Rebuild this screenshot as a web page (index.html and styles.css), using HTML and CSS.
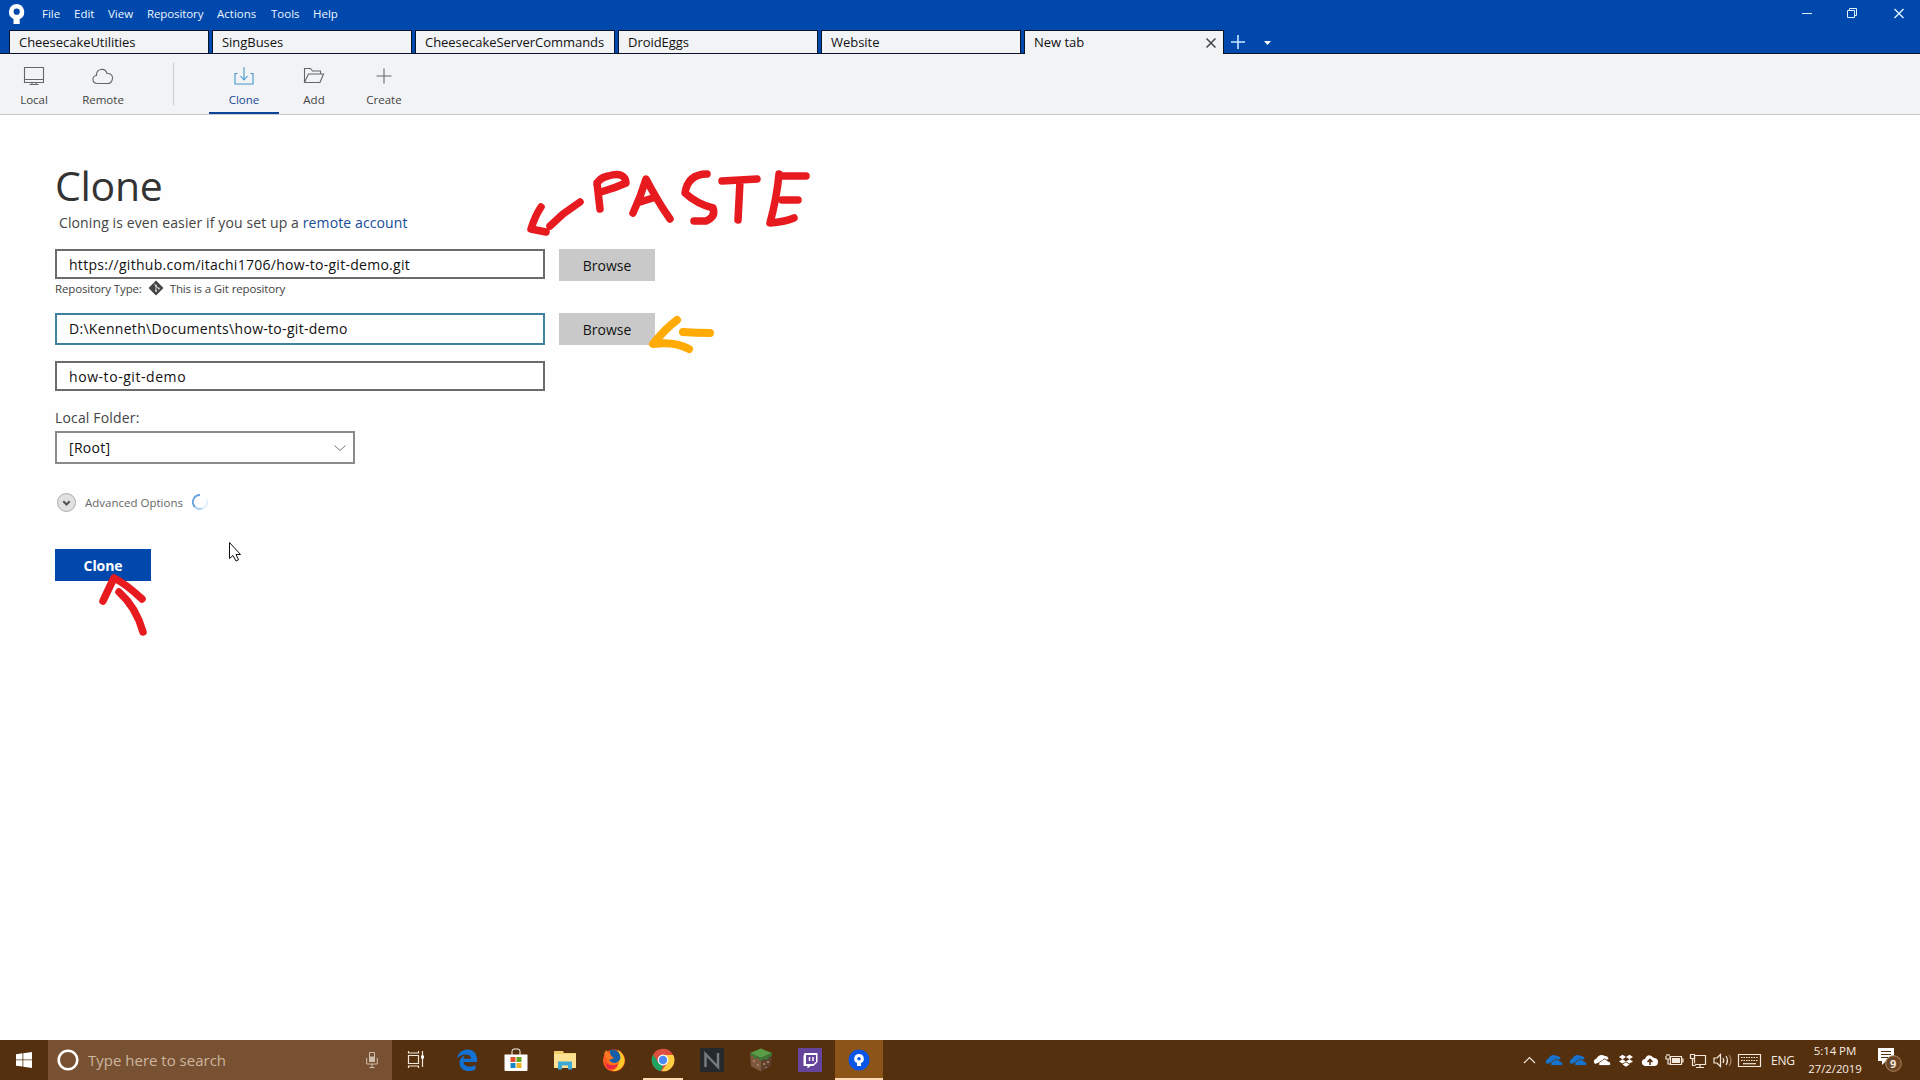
FILE: index.html
```
<!DOCTYPE html>
<html lang="en">
<head>
<meta charset="utf-8">
<title>Clone</title>
<link rel="stylesheet" href="styles.css">
</head>
<body>
<header class="titlebar">
  <svg class="app-logo" width="18" height="21" viewBox="0 0 18 21"><path fill="#fff" fill-rule="evenodd" d="M8.700 0A7.900 7.900 0 0 0 5.500 15V20H11.700V15A7.900 7.900 0 0 0 8.700 0ZM8.700 4.600A3.100 3.100 0 1 1 8.700 10.800A3.100 3.100 0 1 1 8.700 4.600Z"/></svg>
  <nav class="menu">
    <span class="m1">File</span><span class="m2">Edit</span><span class="m3">View</span><span class="m4">Repository</span><span class="m5">Actions</span><span class="m6">Tools</span><span class="m7">Help</span>
  </nav>
  <svg class="window-controls" width="108" height="14" viewBox="0 0 108 14" fill="none" stroke="#dff4ff"><path d="M0 6.500H10M45.500 3.500h7v7h-7zM47.500 3V1.500h7v7H53"/><path stroke-width="1.400" d="M92.500 2l9 9M101.500 2l-9 9"/></svg>
</header>
<div class="tabs">
  <div class="tab">CheesecakeUtilities</div>
  <div class="tab">SingBuses</div>
  <div class="tab">CheesecakeServerCommands</div>
  <div class="tab">DroidEggs</div>
  <div class="tab">Website</div>
  <div class="tab active">New tab<svg width="10" height="10" viewBox="0 0 10 10" stroke="#444" stroke-width="1.500"><path d="M.5.500l9 9M9.500.500l-9 9"/></svg></div>
  <svg class="tab-actions" width="50" height="28" viewBox="0 0 50 28"><path d="M14 5v14M7 12h14" stroke="#c9e9ff" stroke-width="1.600"/><path d="M40 11h7l-3.500 4z" fill="#fff"/></svg>
</div>
<div class="toolbar">
  <div class="tool t-local"><svg width="24" height="24" viewBox="0 0 24 24"><path d="M2.500 3.500h19v15h-19zM2.500 15.500h19M10 18.500v2M14 18.500v2M7.500 20.500h9"/></svg><span>Local</span></div>
  <div class="tool t-remote"><svg width="24" height="24" viewBox="0 0 24 24"><path d="M7 19.500C0 19.500 1 11.500 5.500 11.500C5 4 14.500 3.500 16 9.500C21 9 22.500 13 21 16.500C20 19 19 19.500 17 19.500Z"/></svg><span>Remote</span></div>
  <i class="divider"></i>
  <div class="tool t-clone"><svg width="24" height="24" viewBox="0 0 24 24"><path d="M12 3v12.500M8.500 12l3.500 4 3.500-4M5.500 9.500h-2.500v10.500h18v-10.500h-2.500"/></svg><span>Clone</span></div>
  <div class="tool"><svg width="24" height="24" viewBox="0 0 24 24"><path d="M2.500 18.500v-14h6l2 2.500h8v3M2.500 18.500l4-8.500h15l-3.500 8.500z"/></svg><span>Add</span></div>
  <div class="tool"><svg width="24" height="24" viewBox="0 0 24 24"><path d="M12 4.500v15M4.500 12h15"/></svg><span>Create</span></div>
</div>
<main class="page">
  <h1>Clone</h1>
  <p class="hint">Cloning is even easier if you set up a <a>remote account</a></p>
  <div class="row first"><div class="field url">https://github.com/itachi1706/how-to-git-demo.git</div><div class="button">Browse</div></div>
  <div class="repo-type"><span>Repository Type:</span><svg width="16" height="16" viewBox="0 0 16 16"><path d="M8 .5L15.500 8L8 15.500L.5 8Z" fill="#444"/><path d="M6 3.500L8 5.500V11M8 6l2.700 2.500" stroke="#ddd" fill="none"/><g fill="#ddd"><circle cx="8" cy="5.700" r="1"/><circle cx="8" cy="11" r="1"/><circle cx="10.800" cy="8.500" r="1"/></g></svg><span>This is a Git repository</span></div>
  <div class="row second"><div class="field path">D:\Kenneth\Documents\how-to-git-demo</div><div class="button">Browse</div></div>
  <div class="field name">how-to-git-demo</div>
  <div class="folder-label">Local Folder:</div>
  <div class="select"><span>[Root]</span><svg width="12" height="8" viewBox="0 0 12 8" fill="none" stroke="#777"><path d="M.5 1.500L6 6.500l5.500-5"/></svg></div>
  <div class="advanced">
    <svg width="20" height="20" viewBox="0 0 20 20"><circle cx="10.500" cy="10.500" r="9" fill="#e1e1e1" stroke="#aaa"/><path d="M7.300 9.300L10.500 12.500l3.200-3.200" fill="none" stroke="#555" stroke-width="2.200"/></svg>
    <span>Advanced Options</span>
    <svg width="16" height="16" viewBox="0 0 16 16" fill="none" stroke-width="1.800"><path d="M8 1A7 7 0 0 0 3 13" stroke="#6a9fdf"/><path d="M3 13A7 7 0 0 0 10 14.700" stroke="#a9cdf4"/><path d="M10 14.700A7 7 0 0 0 15 6" stroke="#e0edfb"/></svg>
  </div>
  <div class="button primary">Clone</div>
</main>
<footer class="taskbar">
  <div class="start"><svg width="16" height="16" viewBox="0 0 16 16" fill="#fff"><path d="M0 2.300L6.500 1.300V7.500H0zM7.300 1.200L16 0V7.500H7.300zM0 8.300H6.500V14.600L0 13.700zM7.300 8.300H16V16L7.300 14.800z"/></svg></div>
  <div class="search"><svg width="22" height="22" viewBox="0 0 22 22"><circle cx="11" cy="11" r="9.300" fill="none" stroke="#fff" stroke-width="2.600"/></svg><span>Type here to search</span><svg class="mic" width="12" height="18" viewBox="0 0 12 18" fill="none" stroke="#d0bdab"><path d="M3.500 1.500h5v9h-5z"/><path d="M3.500 6h5v4.500h-5z" fill="#d0bdab"/><path d="M.7 7v6h10.600V7M6 13v3.500M3.500 16.500h5"/></svg></div>
  <div class="app taskview"><svg width="18" height="18" viewBox="0 0 18 18" fill="none" stroke="#f4e8dc" stroke-width="1.200"><path d="M1.500 4.500h10v8h-10zM1.500 0v2h10V0M1.500 17v-2h10v2M15.500 0v16"/><path d="M14 4.500h3v3h-3z" fill="#fff" stroke="none"/></svg></div>
  <div class="app"><svg width="24" height="24" viewBox="0 0 24 24"><path fill="#1271d2" d="M2 10.500C3.500 4 8 1.500 12.500 1.500C19 1.500 22 6.500 22 11V14H8.500C9 19 16 20 20.500 17V21.500C13.500 25 4.500 22.500 4.500 15C4.500 11 7 8.500 10 7.500C9 8.800 8.500 9.700 8.500 10.800H16C16 5 6.500 5 2 10.500Z"/></svg></div>
  <div class="app"><svg width="24" height="24" viewBox="0 0 24 24"><path d="M8 7V3.500Q8 1 10 1h4q2 0 2 2.500V7" fill="none" stroke="#fff"/><path d="M.5 6.500h23V22q0 1-1 1h-21q-1 0-1-1z" fill="#fff"/><path fill="#e04e2d" d="M6.500 9h5v5h-5z"/><path fill="#65a51d" d="M12.500 9h5v5h-5z"/><path fill="#1586c8" d="M6.500 15h5v5h-5z"/><path fill="#f0b52c" d="M12.500 15h5v5h-5z"/></svg></div>
  <div class="app"><svg width="24" height="24" viewBox="0 0 24 24"><path d="M1 3h9l1 2h12v14H1z" fill="#f2cd6a"/><path d="M1 6h22v14H1z" fill="#ffe194"/><path d="M5 21.500v-8h14v8h-4v-4h-6v4z" fill="#3fa9d5"/></svg></div>
  <div class="app"><svg width="24" height="24" viewBox="0 0 24 24"><circle cx="12" cy="12.500" r="11" fill="#ff5a20"/><path d="M16 2Q21 5 22.500 11A11 11 0 0 1 10 23Q20 20 16 2Z" fill="#ffc928"/><path d="M2 6L4 2 7 5Q17 2 18 11Q17 17 11 17Q5 16 5 11Z" fill="#ff7722"/><path d="M8 2Q16 1 18 7Q20 13 13 15Q9 15 7 12L12 10Q7 7 8 2Z" fill="#155fa8"/><path d="M3 14Q8 20 16 16Q12 23 5 20Z" fill="#e82745"/></svg></div>
  <div class="app running"><svg width="24" height="24" viewBox="0 0 24 24"><circle cx="12" cy="12" r="11.300" fill="#dd4f3f"/><path d="M2.200 6.400L7.500 15L12 17.500L10 23.200A11.300 11.300 0 0 1 2.200 6.400Z" fill="#1da261"/><path d="M12 7H22.200A11.300 11.300 0 0 1 10.500 23.200L17 14Z" fill="#ffcf43"/><circle cx="12" cy="12" r="5.400" fill="#fff"/><circle cx="12" cy="12" r="4.200" fill="#4c8bf5"/></svg></div>
  <div class="app"><svg width="24" height="24" viewBox="0 0 24 24"><path d="M0 0h24v24H0z" fill="#25292c"/><path d="M5.500 19V6l12.500 13V5" fill="none" stroke="#747b81" stroke-width="2.500"/></svg></div>
  <div class="app"><svg width="24" height="24" viewBox="0 0 24 24"><path d="M1 5L12 .5L23 5L12 10Z" fill="#5a9d47"/><path d="M1 5l11 5v13.500L2 18z" fill="#80583f"/><path d="M23 5l-11 5v13.500L22 18z" fill="#5e402f"/><path d="M1 5l11 5 11-5v3l-3 1-2 3-3-1-3 2-3-3-3 1-2-3-2 0z" fill="#3c7835"/><path d="M4 12h2v2H4zm4 4h2v2H8zm6-1h2v2h-2zm4-2h2v2h-2zm-2 6h2v1h-2z" fill="#a47d63"/></svg></div>
  <div class="app"><svg width="24" height="24" viewBox="0 0 24 24"><path d="M0 0h24v24H0z" fill="#65459b"/><path d="M6.500 5h13v9l-4 4h-3l-3 2.500V18h-4V8z" fill="#fff"/><path d="M8 7h10v6.500L15.500 16H8z" fill="#65459b"/><path d="M11.500 9v4M15 9v4" stroke="#fff" stroke-width="1.500"/></svg></div>
  <div class="app current"><svg width="24" height="24" viewBox="0 0 24 24"><circle cx="12" cy="12" r="10.500" fill="#0855e8"/><path fill="#fff" fill-rule="evenodd" d="M12 6a4.700 4.700 0 0 0-2 9v3h4v-3a4.700 4.700 0 0 0-2-9zm0 3a1.800 1.800 0 1 1 0 3.600 1.800 1.800 0 0 1 0-3.600z"/></svg></div>
  <div class="tray">
    <svg width="240" height="24" viewBox="0 0 240 24" fill="none" stroke="#f4e8dc" stroke-width="1.200">
      <path d="M1 15l5.500-5.500L12 15"/>
      <g fill="#1674cf" stroke="none">
        <path d="M24 16q-3-4 1.500-5.500 3-5.500 8.500-2.500 3 0 3.500 3z"/><path stroke="#54300f" stroke-width=".8" d="M28 17.500q-1-3.500 2.500-4.500 3-4 6 0 4.500 1 2.500 4.500z"/>
        <path d="M48 16q-3-4 1.500-5.500 3-5.500 8.500-2.500 3 0 3.500 3z"/><path stroke="#54300f" stroke-width=".8" d="M52 17.500q-1-3.500 2.500-4.500 3-4 6 0 4.500 1 2.500 4.500z"/>
      </g>
      <g fill="#fff" stroke="none"><path d="M72 16q-3-4 1.500-5.500 3-5.500 8.500-2.500 3 0 3.500 3z"/><path stroke="#54300f" stroke-width=".8" d="M76 17.500q-1-3.500 2.500-4.500 3-4 6 0 4.500 1 2.500 4.500z"/></g>
      <path stroke="none" fill="#fff" d="M96 9l3.500-2.200L103 9l-3.500 2.200zM103 9l3.500-2.200L110 9l-3.500 2.200zM96 13.400l3.500-2.200 3.500 2.200-3.500 2.200zM103 13.400l3.500-2.200 3.500 2.200-3.500 2.200zM99.500 16.500l3.500-2.200 3.500 2.200L103 18.700z"/>
      <path stroke="none" fill="#fff" d="M122 18q-4-1-3-5 1-2 3-2 3-7 9-1 4 0 4 4 0 4-4 4z"/><path d="M127 17v-5M124.500 14l2.500-2.500 2.500 2.500" stroke="#54300f" stroke-width="1.600"/>
      <path d="M147.500 8.500h11v8h-11zM158.500 11h1.500v3h-1.500M143 8v3h4V8M144 6v2M146 6v2M145 11v5h2"/><path fill="#f4e8dc" d="M149 10h8v5h-8z" stroke="none"/>
      <path d="M171.500 7.500h11v9h-11zM177 16.500v3M173 19.500h8"/><path fill="#54300f" d="M167.500 6.500h4v4h-4zM169.500 10.500v7h3"/>
      <path d="M191 10h3l3.500-3.500v12L194 15h-3zM200 10q1.500 2.500 0 5M203 8q3 4.500 0 9"/><path d="M206 7q4 5.500 0 11" stroke="#a3815d"/>
      <path d="M215.500 6.500h22v12h-22z"/><path d="M218 9.500h17M218 12.500h17" stroke-dasharray="1.500 1"/><path d="M220 15.700h13"/>
    </svg>
    <span class="lang">ENG</span>
    <div class="clock"><span>5:14 PM</span><span>27/2/2019</span></div>
    <div class="notify"><svg width="24" height="24" viewBox="0 0 24 24"><path d="M0 0h16v13H8l-4 4v-4H0z" fill="#fff"/><path d="M3 3.500h10M3 6.500h10M3 9.500h7" stroke="#54300f"/><circle cx="15.500" cy="15.500" r="7.800" fill="#6b4423" stroke="#b28b62"/></svg><b>9</b></div>
  </div>
</footer>
<svg class="ink" width="1920" height="1040" viewBox="0 0 1920 1040" fill="none" stroke-linecap="round" stroke-linejoin="round">
  <g stroke="#e71b1f" stroke-width="7.500">
    <path d="M580 202L563 214L550 226M541 207Q535 216 531 229L546 232"/>
    <path d="M597 183L600 209M597 184Q599 178 608 176Q625 171 626 183Q615 188 601 192"/>
    <path d="M633 213Q641 196 646 179Q658 202 670 219M640 202L656 197"/>
    <path d="M707 174Q688 174 685 193Q697 204 713 208Q716 217 706 221H694"/>
    <path d="M722 181L757 179M740 181L738 220"/>
    <path d="M779 174Q777 197 770 223Q784 222 794 218M779 176H806M782 200H798"/>
    <path d="M103 601Q110 586 114 578Q126 584 142 599M119 592Q136 607 143 632"/>
  </g>
  <path d="M677 320Q665 329 653 344Q674 341 689 349M683 332Q696 333 710 333" stroke="#ffaa05" stroke-width="8"/>
</svg>
<svg class="cursor" width="14" height="21" viewBox="0 0 14 21"><path d="M.5.500v16l3.500-3 3 5.500 2.500-1.200-2.500-5.300h4.500z" fill="#fff" stroke="#111"/></svg>
</body>
</html>
```
FILE: styles.css
```
* { box-sizing: border-box; }
body { margin: 0; width: 1920px; height: 1080px; overflow: hidden; display: flex; flex-direction: column; position: relative; background: #fefefe; font-family: "Open Sans", "Noto Sans", sans-serif; color: #111; white-space: nowrap; }
svg { display: block; flex: none; }
.titlebar { height: 30px; flex: none; background: #0048ac; display: flex; padding-left: 8px; color: #eef6ff; }
.app-logo { margin-top: 4px; }
.menu { display: flex; margin-left: 16px; font-size: 11.5px; line-height: 28px; }
.m1 { width: 32px; }
.m2 { width: 34px; }
.m3 { width: 39px; }
.m4 { width: 70px; letter-spacing: -.1px; }
.m5 { width: 54px; }
.m6 { width: 42px; }
.window-controls { margin: 7px 10px 0 auto; }
.tabs { height: 24px; flex: none; background: #0048ac; display: flex; gap: 3px; padding-left: 9px; border-bottom: 1px solid #07142c; }
.tab { width: 200px; height: 23px; border: 1px solid #07142c; border-bottom: 0; background: #f1f3f5; padding-left: 9px; font-size: 13px; line-height: 23px; letter-spacing: -.04px; }
.tab.active { height: 24px; display: flex; justify-content: space-between; padding-right: 7px; }
.tab.active svg { margin-top: 7px; }
.tab-actions { margin-left: -3px; }
.toolbar { height: 61px; flex: none; background: #f1f3f5; border-bottom: 1px solid #c6c8ca; display: flex; color: #444; }
.tool { width: 70px; height: 60px; display: flex; flex-direction: column; align-items: center; padding-top: 9px; font-size: 11.5px; line-height: 18px; gap: 3px; }
.tool svg { fill: none; stroke: #666; stroke-width: 1.1; margin-top: 1px; }
.t-local { width: 68px; }
.divider { width: 1px; height: 42px; margin: 9px 35px 0 35px; background: #c8cacc; }
.t-clone { color: #174a96; border-bottom: 2px solid #0c4598; }
.t-clone svg { stroke: #4696cc; }
.page { flex: 1; padding-left: 55px; display: flex; flex-direction: column; align-items: flex-start; }
h1 { margin: 40px 0 0; font-size: 41px; line-height: 60px; font-weight: 400; color: #333; letter-spacing: -.3px; }
.hint { margin: -2px 0 0 4px; font-size: 14px; line-height: 20px; color: #444; letter-spacing: .11px; }
.hint a { color: #184c98; }
.row { display: flex; gap: 14px; height: 32px; }
.row.first { margin-top: 16px; }
.field { width: 490px; height: 30px; border: 2px solid #6c6c6c; padding-left: 12px; font-size: 14px; line-height: 27px; letter-spacing: .28px; background: #fff; }
.field.path { height: 32px; border-color: #3f829f; line-height: 28px; letter-spacing: .3px; }
.button { width: 96px; height: 32px; background: #c9c9c9; font-size: 14px; line-height: 33px; text-align: center; }
.repo-type { height: 16px; margin-top: -1px; display: flex; align-items: center; font-size: 11.5px; letter-spacing: -.14px; color: #444; gap: 6px; }
.row.second { margin-top: 17px; }
.field.name { margin-top: 16px; letter-spacing: .56px; }
.folder-label { margin-top: 17px; height: 20px; line-height: 20px; font-size: 14px; letter-spacing: .16px; color: #444; }
.select { margin-top: 3px; width: 300px; height: 33px; border: 2px solid #8a8a8a; padding: 0 7px 0 12px; display: flex; align-items: center; justify-content: space-between; font-size: 14px; letter-spacing: .3px; }
.advanced { margin: 28px 0 0 1px; height: 20px; display: flex; align-items: center; gap: 9px; font-size: 11.5px; color: #666; }
.primary { margin-top: 37px; background: #0048ac; color: #fff; font-weight: 700; letter-spacing: -.1px; }
.taskbar { height: 40px; flex: none; background: #54300f; display: flex; color: #f6ece2; }
.start { width: 48px; display: grid; place-items: center; }
.search { width: 344px; background: #785132; display: flex; align-items: center; padding: 0 14px 0 9px; font-size: 15px; color: #ccb69f; }
.search span { margin-left: 9px; }
.mic { margin-left: auto; }
.app { width: 49px; height: 40px; display: grid; place-items: center; }
.taskview { width: 48px; margin-right: 2px; }
.running { background: linear-gradient(#ffd9b2, #ffd9b2) center bottom / 40px 2px no-repeat; }
.current { width: 48px; margin-left: 1px; background: #8c5419; box-shadow: inset 0 -2px #ffd9b2; }
.tray { margin-left: auto; display: flex; align-items: center; font-size: 12px; }
.lang { margin-left: 8px; width: 22px; letter-spacing: -.2px; }
.clock { width: 54px; margin-left: 15px; display: flex; flex-direction: column; align-items: center; font-size: 11.5px; line-height: 18px; letter-spacing: -.1px; }
.notify { position: relative; width: 41px; margin-left: 17px; }
.notify svg { margin-left: -1px; }
.notify b { position: absolute; left: 11px; top: 8px; font-size: 11px; line-height: 15px; }
.ink { position: absolute; left: 0; top: 0; pointer-events: none; }
.cursor { position: absolute; left: 229px; top: 542px; }
```
